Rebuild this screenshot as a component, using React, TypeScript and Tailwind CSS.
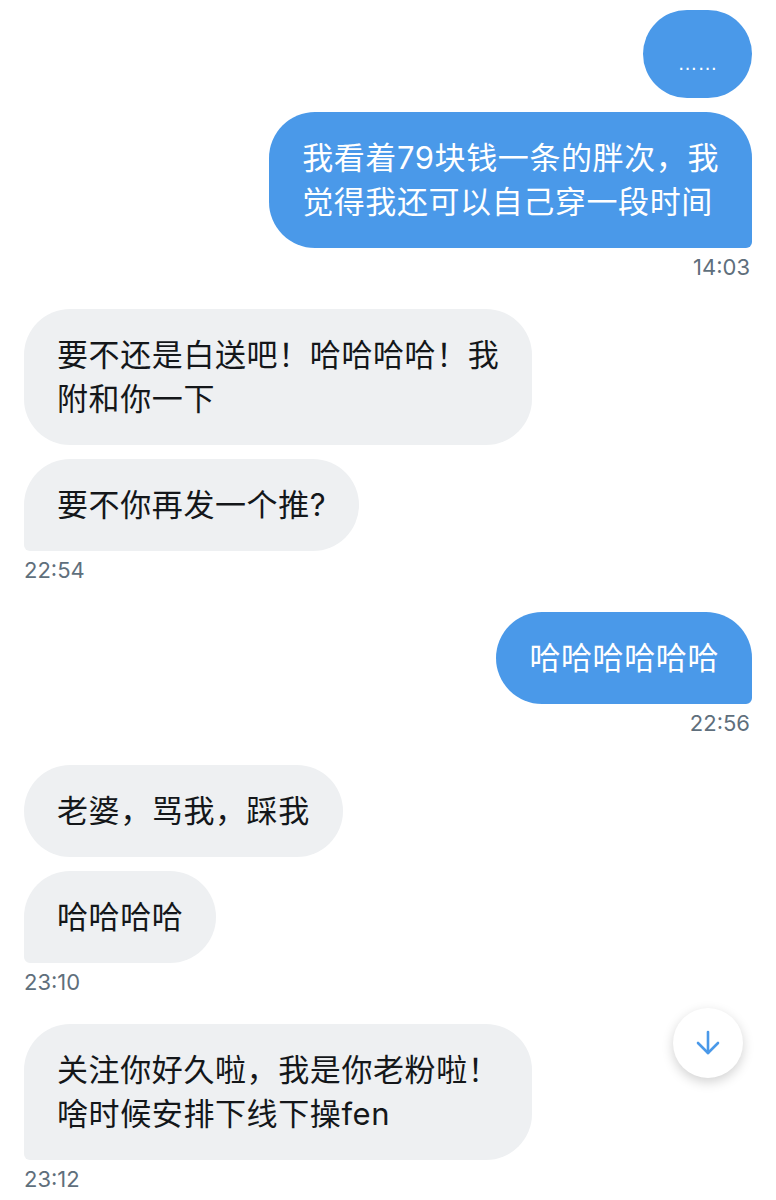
import React from 'react';

type Msg = { lines: string[] };
type Group = { mine: boolean; time: string; msgs: Msg[] };

const groups: Group[] = [
  {
    mine: true,
    time: '14:03',
    msgs: [{ lines: ['……'] }, { lines: ['我看着79块钱一条的胖次，我', '觉得我还可以自己穿一段时间'] }],
  },
  {
    mine: false,
    time: '22:54',
    msgs: [{ lines: ['要不还是白送吧！哈哈哈哈！我', '附和你一下'] }, { lines: ['要不你再发一个推?'] }],
  },
  { mine: true, time: '22:56', msgs: [{ lines: ['哈哈哈哈哈哈'] }] },
  {
    mine: false,
    time: '23:10',
    msgs: [{ lines: ['老婆，骂我，踩我'] }, { lines: ['哈哈哈哈'] }],
  },
  {
    mine: false,
    time: '23:12',
    msgs: [{ lines: ['关注你好久啦，我是你老粉啦！', '啥时候安排下线下操fen'] }],
  },
];

const font = { fontFamily: 'Inter, "Noto Sans CJK SC", sans-serif' };

function Bubble({ msg, mine, last }: { msg: Msg; mine: boolean; last: boolean }) {
  // the ellipsis bubble is a small pill of its own
  if (msg.lines[0] === '……') {
    return (
      <div className="flex h-[88px] w-[109px] items-center justify-center rounded-full bg-[#4a99e9] pt-[18px] font-['Liberation_Sans'] text-[20px] text-white">
        ……
      </div>
    );
  }
  const corner = last ? (mine ? 'rounded-br-[6px]' : 'rounded-bl-[6px]') : '';
  const colors = mine ? 'bg-[#4a99e9] text-white' : 'bg-[#eef0f2] text-[#14171a]';
  return (
    <div className={`w-fit whitespace-nowrap rounded-[46px] px-[33px] py-6 text-[31px] leading-[44px] tracking-[0.6px] ${colors} ${corner}`}>
      {msg.lines.map((l) => (
        <div key={l}>{l}</div>
      ))}
    </div>
  );
}

export default function App() {
  return (
    <div className="relative h-[1200px] w-[776px] overflow-hidden bg-white" style={font}>
      <div className="flex flex-col gap-[29px] px-6 pt-[10px]">
        {groups.map((g) => (
          <div key={g.time} className={`flex flex-col ${g.mine ? 'items-end' : 'items-start'}`}>
            <div className={`flex flex-col gap-[14px] ${g.mine ? 'items-end' : 'items-start'}`}>
              {g.msgs.map((m, i) => (
                <Bubble key={i} msg={m} mine={g.mine} last={i === g.msgs.length - 1} />
              ))}
            </div>
            <div className="mt-[6px] pr-[2px] text-[22px] leading-[26px] text-[#5f6f7c]">{g.time}</div>
          </div>
        ))}
      </div>

      {/* scroll to bottom */}
      <div className="absolute left-[673px] top-[1008px] flex h-[70px] w-[70px] items-center justify-center rounded-full bg-white shadow-[0_4px_12px_rgba(0,0,0,0.18)]">
        <svg width="28" height="28" viewBox="0 0 28 28" fill="none" stroke="#4a99e9" strokeWidth="2.6" strokeLinecap="round" strokeLinejoin="round">
          <path d="M14 3v21" />
          <path d="M4 14l10 10 10-10" />
        </svg>
      </div>
    </div>
  );
}
